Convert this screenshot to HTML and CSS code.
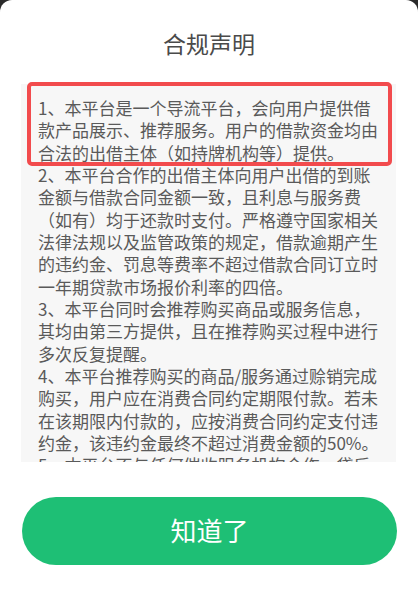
FILE: index.html
```html
<!DOCTYPE html>
<html lang="zh-CN">
<head>
<meta charset="utf-8">
<title>合规声明</title>
<link rel="stylesheet" href="styles.css">
</head>
<body>
<div class="sheet">
  <h1 class="title">合规声明</h1>
  <div class="content-wrap">
    <div class="content">
      <p>1、本平台是一个导流平台，会向用户提供借款产品展示、推荐服务。用户的借款资金均由合法的出借主体（如持牌机构等）提供。</p>
      <p>2、本平台合作的出借主体向用户出借的到账金额与借款合同金额一致，且利息与服务费（如有）均于还款时支付。严格遵守国家相关法律法规以及监管政策的规定，借款逾期产生的违约金、罚息等费率不超过借款合同订立时一年期贷款市场报价利率的四倍。</p>
      <p>3、本平台同时会推荐购买商品或服务信息，其均由第三方提供，且在推荐购买过程中进行多次反复提醒。</p>
      <p>4、本平台推荐购买的商品/服务通过赊销完成购买，用户应在消费合同约定期限付款。若未在该期限内付款的，应按消费合同约定支付违约金，该违约金最终不超过消费金额的50%。</p>
      <p>5、本平台不与任何催收服务机构合作，贷后管理由出借主体依法依规进行。</p>
    </div>
    <div class="highlight"></div>
  </div>
  <div class="actions">
    <button class="btn-ok" type="button">知道了</button>
  </div>
</div>
</body>
</html>
```

FILE: styles.css
```css
html, body {
  margin: 0;
  padding: 0;
}
body {
  background: #2a2a2a;
  font-family: "Noto Sans CJK SC", "Noto Sans", sans-serif;
}
.sheet {
  width: 418px;
  height: 595px;
  background: #ffffff;
  border-radius: 12px 12px 0 0;
  display: flex;
  flex-direction: column;
  overflow: hidden;
}
.title {
  margin: 27px 0 0;
  height: 32px;
  line-height: 32px;
  font-size: 23px;
  font-weight: 400;
  color: #4a4a4a;
  text-align: center;
}
.content-wrap {
  position: relative;
  margin: 25px 22px 0 21px;
}
.content {
  height: 378px;
  box-sizing: border-box;
  padding: 13px 14px 0 17px;
  background: #f7f7f7;
  overflow: hidden;
  color: #5a5a5a;
  font-size: 17px;
  line-height: 22.33px;
}
.content p {
  margin: 0;
}
.highlight {
  position: absolute;
  left: 6px;
  top: -2px;
  width: 365px;
  height: 84px;
  box-sizing: border-box;
  border: 4px solid #f24b4d;
  border-radius: 5px;
  pointer-events: none;
}
.actions {
  padding: 35px 21px 0 22px;
}
.btn-ok {
  display: block;
  width: 100%;
  height: 68px;
  border: 0;
  border-radius: 34px;
  background: #1ebf75;
  color: #ffffff;
  font-family: "Noto Sans CJK SC", "Noto Sans", sans-serif;
  font-size: 26px;
  font-weight: 400;
  padding: 0 0 3px;
}
```
